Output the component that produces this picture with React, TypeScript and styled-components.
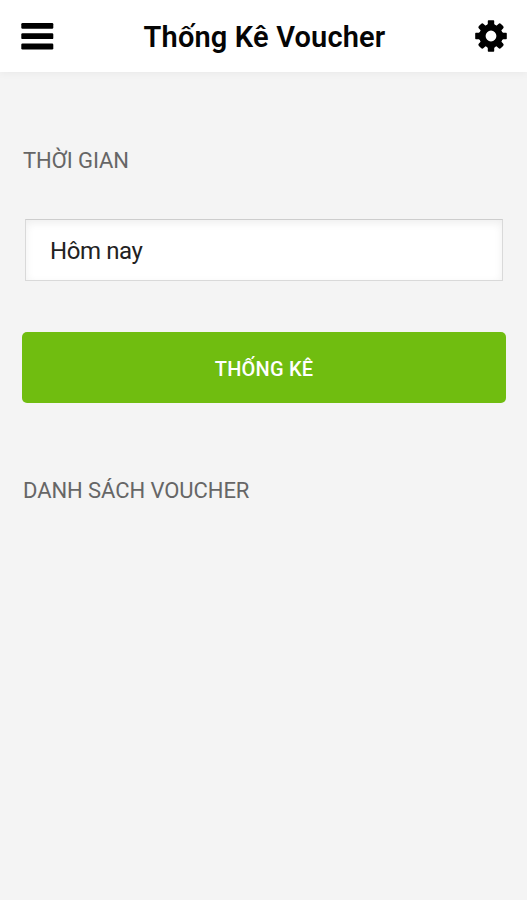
import React from "react";
import styled, { createGlobalStyle } from "styled-components";

const GlobalStyle = createGlobalStyle`
  * { box-sizing: border-box; }
  body { margin: 0; background: #f4f4f4; font-family: Roboto, "Noto Sans", sans-serif; color: #111; }
`;

const Page = styled.div`
  min-height: 900px;
  background: #f4f4f4;
`;

const Header = styled.header`
  height: 72px;
  padding: 0 20px 0 21px;
  display: flex;
  align-items: center;
  justify-content: space-between;
  background: #fff;
  box-shadow: 0 1px 8px rgba(0, 0, 0, 0.05);
`;

const Title = styled.h1`
  margin: 0;
  padding-top: 1px;
  font-size: 29px;
  line-height: 34px;
  font-weight: 600;
  letter-spacing: 0.16px;
  color: #050505;
`;

const IconButton = styled.button`
  display: flex;
  padding: 0;
  border: 0;
  background: none;
  color: #000;
`;

const Content = styled.main`
  padding: 74px 21px 0 22px;
`;

const SectionLabel = styled.h2`
  margin: 0 0 0 1px;
  font-size: 22px;
  line-height: 30px;
  font-weight: 400;
  letter-spacing: -0.07px;
  color: #666;
`;

const SelectField = styled.div`
  margin: 43px 3px 0;
  height: 62px;
  padding: 2px 24px 0;
  display: flex;
  align-items: center;
  border: 1px solid #d9d9d9;
  border-top-color: #cdcdcd;
  background: #fff;
  box-shadow: inset 0 3px 8px rgba(0, 0, 0, 0.07);
  font-size: 24px;
  letter-spacing: -0.42px;
  color: #222;
`;

const SubmitButton = styled.button`
  display: block;
  width: 100%;
  height: 71px;
  margin: 51px 0 73px;
  padding: 3px 0 0;
  border: 0;
  border-radius: 5px;
  background: #70bd10;
  color: #fff;
  font: 500 20px Roboto, "Noto Sans", sans-serif;
  letter-spacing: 0.2px;
`;

const straightAngles = [0, 90, 180, 270];
const diagonalAngles = [45, 135, 225, 315];

function MenuIcon() {
  return (
    <svg width="33" height="28" viewBox="0 0 33 28" fill="currentColor">
      <rect x="0.3" y="1" width="32" height="5.8" rx="1.2" />
      <rect x="0.3" y="11.3" width="32" height="5.8" rx="1.2" />
      <rect x="0.3" y="21.6" width="32" height="5.8" rx="1.2" />
    </svg>
  );
}

function GearIcon() {
  return (
    <svg width="32" height="32" viewBox="-16 -16 32 32" fill="currentColor">
      <circle r="8.6" fill="none" stroke="currentColor" strokeWidth="6.4" />
      {straightAngles.map((angle) => (
        <path
          key={angle}
          transform={`rotate(${angle})`}
          d="M-4.4-10.6L-3.2-12V-15.1Q-3.2-15.8-2.5-15.8H2.5Q3.2-15.8 3.2-15.1V-12L4.4-10.6Z"
        />
      ))}
      {diagonalAngles.map((angle) => (
        <rect
          key={angle}
          transform={`rotate(${angle})`}
          x="-3.3"
          y="-15.6"
          width="6.6"
          height="6"
          rx="1.8"
        />
      ))}
    </svg>
  );
}

export default function App() {
  return (
    <Page>
      <GlobalStyle />
      <Header>
        <IconButton aria-label="Menu">
          <MenuIcon />
        </IconButton>
        <Title>Thống Kê Voucher</Title>
        <IconButton aria-label="Cài đặt">
          <GearIcon />
        </IconButton>
      </Header>
      <Content>
        <SectionLabel>THỜI GIAN</SectionLabel>
        <SelectField>Hôm nay</SelectField>
        <SubmitButton>THỐNG KÊ</SubmitButton>
        <SectionLabel>DANH SÁCH VOUCHER</SectionLabel>
      </Content>
    </Page>
  );
}
